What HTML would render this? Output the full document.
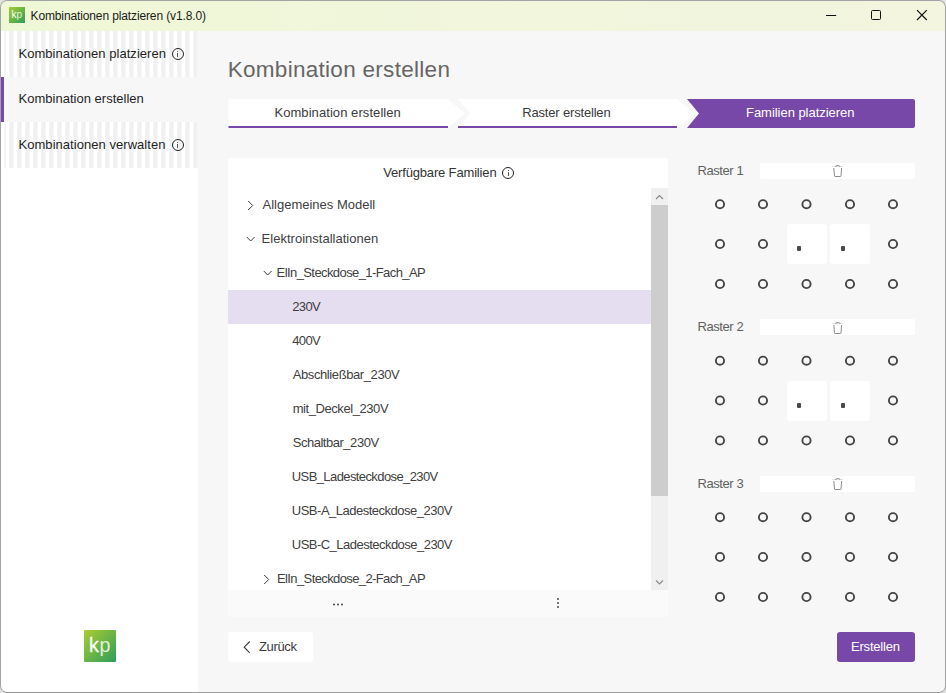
<!DOCTYPE html>
<html><head><meta charset="utf-8">
<style>
*{margin:0;padding:0;box-sizing:border-box}
html,body{width:946px;height:693px;overflow:hidden;background:#e2e2e2}
body{position:relative;font-family:"Liberation Sans",sans-serif;color:#333}
.abs{position:absolute}
.tx{position:absolute;white-space:nowrap;z-index:5}
#win{position:absolute;left:0;top:0;width:946px;height:693px;border-radius:7px;overflow:hidden;background:#f7f7f7}
#frame{position:absolute;left:0;top:0;width:946px;height:693px;border:1px solid #a3a3a6;border-bottom-color:#999;border-radius:7px;pointer-events:none;z-index:10}
#title{position:absolute;left:0;top:0;width:946px;height:31px;background:linear-gradient(90deg,#eff8d6,#f1f6dc 50%,#f3f5df)}
#sidebar{position:absolute;left:1px;top:31px;width:197px;height:662px;background:#fff}
.stripes{background:repeating-linear-gradient(90deg,#f5f5f5 0,#f5f5f5 1px,#f0f0f0 1px,#f0f0f0 4px,#f5f5f5 4px,#f5f5f5 5px,#fff 5px,#fff 8px)}
.stripes:before{content:"";position:absolute;left:0;top:0;width:4px;height:100%;background:linear-gradient(90deg,#fff 0,#fff 3px,#f6f6f6 3px)}
.navitem{position:absolute;left:0;width:197px}
.info{position:absolute;width:12px;height:12px;border:1px solid #222;border-radius:50%;z-index:5}
.info:after{content:"";position:absolute;left:4.5px;top:3.5px;width:1px;height:4.8px;background:#555}
.info:before{content:"";position:absolute;left:4.5px;top:1.8px;width:1px;height:1px;background:#666}
.dot{position:absolute;width:10px;height:10px;border:1.8px solid #454545;border-radius:50%}
.cell{position:absolute;width:40px;height:40px;background:#fff;border-radius:3px}
.del{position:absolute;left:760px;width:155px;height:16px;background:#fff;border-radius:2px}
</style></head><body>
<div id="win">
  <div id="title">
    <div class="abs" style="left:9px;top:7px;width:16px;height:16px;background:linear-gradient(135deg,#a7cb30,#2f9f5a);"></div>
    <div class="abs" style="left:11.5px;top:9px;font-size:10px;line-height:12px;color:#fff">k<span style="opacity:.8">p</span></div>
    <svg class="abs" style="left:0;top:0" width="946" height="31">
      <line x1="826" y1="15.5" x2="836.2" y2="15.5" stroke="#111" stroke-width="1"/>
      <rect x="871.5" y="10.5" width="9" height="9" rx="1" fill="none" stroke="#111" stroke-width="1"/>
      <path d="M917 10.2 L926.8 20 M926.8 10.2 L917 20" stroke="#111" stroke-width="1.2"/>
    </svg>
  </div>
  <div id="sidebar">
    <div class="navitem stripes" style="top:0;height:46px"></div>
    <div class="navitem" style="top:46px;height:45px;background:#f7f7f7">
      <div class="abs" style="left:0;top:0;width:3px;height:45px;background:#7748a8"></div>
    </div>
    <div class="navitem stripes" style="top:91px;height:46px"></div>
  </div>
  <svg class="abs" style="left:84px;top:630px" width="32" height="32"><defs><linearGradient id="lg" x1="0" y1="0" x2="1" y2="1"><stop offset="0" stop-color="#aacc2f"/><stop offset="1" stop-color="#2e9e5b"/></linearGradient></defs><rect width="32" height="32" rx="1" fill="url(#lg)"/><text x="5" y="22" font-family="Liberation Sans" font-size="19.6" fill="#fff" stroke="#fff" stroke-width="0.3">k</text><text x="15.6" y="22" font-family="Liberation Sans" font-size="19.6" fill="rgba(255,255,255,0.82)">p</text></svg>
  <div class="info" style="left:171.5px;top:48px"></div>
  <div class="info" style="left:171.5px;top:139px"></div>

  <svg class="abs" style="left:0;top:0" width="946" height="140">
    <path d="M230.5 99 H448 L465 113.5 L448 128 H230.5 Q228.5 128 228.5 126 V101 Q228.5 99 230.5 99 Z" fill="#fff"/>
    <rect x="228.5" y="126" width="219.5" height="2" fill="#7748a8"/>
    <path d="M458 99 H677 L694 113.5 L677 128 H458 L470 113.5 Z" fill="#fff"/>
    <rect x="458" y="126" width="219" height="2" fill="#7748a8"/>
    <path d="M687 99 H913 Q915 99 915 101 V126 Q915 128 913 128 H687 L699 113.5 Z" fill="#7748a8"/>
  </svg>

  <div class="abs" style="left:228px;top:158px;width:440px;height:459px;background:#fff;border-radius:3px;overflow:hidden">
    <div class="info" style="left:274px;top:9px"></div>
    <div class="abs" style="left:0;top:30px;width:423px;height:402px;overflow:hidden">
      <div class="abs" style="left:0;top:102px;width:423px;height:34px;background:#e5def0"></div>
      <svg class="abs" style="left:18px;top:0" width="10" height="34"><path d="M2.2 13 L6.7 17.5 L2.2 22" fill="none" stroke="#383838" stroke-width="1"/></svg>
      <svg class="abs" style="left:18px;top:34px" width="10" height="34"><path d="M0.8 15 L4.7 19 L8.6 15" fill="none" stroke="#383838" stroke-width="1"/></svg>
      <svg class="abs" style="left:35px;top:68px" width="10" height="34"><path d="M0.8 15 L4.7 19 L8.6 15" fill="none" stroke="#383838" stroke-width="1"/></svg>
      <svg class="abs" style="left:34px;top:374px" width="10" height="34"><path d="M2.2 13 L6.7 17.5 L2.2 22" fill="none" stroke="#383838" stroke-width="1"/></svg>
    </div>
    <div class="abs" style="left:423px;top:30px;width:17px;height:402px;background:#f0f0f0">
      <div class="abs" style="left:0;top:17px;width:17px;height:291px;background:#cdcdcd"></div>
      <svg class="abs" style="left:0;top:0" width="17" height="402">
        <path d="M5 11 L8.5 7.5 L12 11" fill="none" stroke="#8a8a8a" stroke-width="1.2"/>
        <path d="M5 392.5 L8.5 396 L12 392.5" fill="none" stroke="#8a8a8a" stroke-width="1.2"/>
      </svg>
    </div>
    <div class="abs" style="left:0;top:432px;width:440px;height:27px;background:#fafafa">
      <svg class="abs" style="left:0;top:0" width="440" height="27">
        <circle cx="106" cy="14.5" r="0.9" fill="#333"/><circle cx="110" cy="14.5" r="0.9" fill="#333"/><circle cx="114" cy="14.5" r="0.9" fill="#333"/>
        <circle cx="330" cy="9" r="0.9" fill="#333"/><circle cx="330" cy="13" r="0.9" fill="#333"/><circle cx="330" cy="17" r="0.9" fill="#333"/>
      </svg>
    </div>
  </div>
  <div id="rasters">
  <div class="del" style="top:162.7px"></div>
<svg class="abs" style="left:826px;top:162px" width="24" height="18"><path d="M6 4.6 H17" stroke="#e4e4e4" stroke-width="1"/><path d="M9.6 4.9 Q9.6 3.6 11 3.6 H12.6 Q14 3.6 14 4.9" fill="none" stroke="#8c8c8c" stroke-width="1"/><path d="M7.8 6 L8.5 14 Q8.6 14.5 9.1 14.5 H14.4 Q14.9 14.5 15 14 L15.6 6" fill="none" stroke="#8c8c8c" stroke-width="1"/></svg>
<div class="cell" style="left:787px;top:224px"></div>
<div class="abs" style="left:797px;top:246px;width:4px;height:5px;background:#4a4a4a;border-radius:1px"></div>
<div class="cell" style="left:830px;top:224px"></div>
<div class="abs" style="left:841px;top:246px;width:4px;height:5px;background:#4a4a4a;border-radius:1px"></div>
<div class="del" style="top:319.2px"></div>
<svg class="abs" style="left:826px;top:318.5px" width="24" height="18"><path d="M6 4.6 H17" stroke="#e4e4e4" stroke-width="1"/><path d="M9.6 4.9 Q9.6 3.6 11 3.6 H12.6 Q14 3.6 14 4.9" fill="none" stroke="#8c8c8c" stroke-width="1"/><path d="M7.8 6 L8.5 14 Q8.6 14.5 9.1 14.5 H14.4 Q14.9 14.5 15 14 L15.6 6" fill="none" stroke="#8c8c8c" stroke-width="1"/></svg>
<div class="cell" style="left:787px;top:380.5px"></div>
<div class="abs" style="left:797px;top:402.5px;width:4px;height:5px;background:#4a4a4a;border-radius:1px"></div>
<div class="cell" style="left:830px;top:380.5px"></div>
<div class="abs" style="left:841px;top:402.5px;width:4px;height:5px;background:#4a4a4a;border-radius:1px"></div>
<div class="del" style="top:475.7px"></div>
<svg class="abs" style="left:826px;top:475px" width="24" height="18"><path d="M6 4.6 H17" stroke="#e4e4e4" stroke-width="1"/><path d="M9.6 4.9 Q9.6 3.6 11 3.6 H12.6 Q14 3.6 14 4.9" fill="none" stroke="#8c8c8c" stroke-width="1"/><path d="M7.8 6 L8.5 14 Q8.6 14.5 9.1 14.5 H14.4 Q14.9 14.5 15 14 L15.6 6" fill="none" stroke="#8c8c8c" stroke-width="1"/></svg>
  <svg class="abs" style="left:0;top:0" width="946" height="693"><g fill="none" stroke="#454545" stroke-width="1.9"><circle cx="720" cy="204.2" r="4.1"/><circle cx="763" cy="204.2" r="4.1"/><circle cx="806.5" cy="204.2" r="4.1"/><circle cx="850" cy="204.2" r="4.1"/><circle cx="893" cy="204.2" r="4.1"/><circle cx="720" cy="244" r="4.1"/><circle cx="763" cy="244" r="4.1"/><circle cx="893" cy="244" r="4.1"/><circle cx="720" cy="284" r="4.1"/><circle cx="763" cy="284" r="4.1"/><circle cx="806.5" cy="284" r="4.1"/><circle cx="850" cy="284" r="4.1"/><circle cx="893" cy="284" r="4.1"/><circle cx="720" cy="360.7" r="4.1"/><circle cx="763" cy="360.7" r="4.1"/><circle cx="806.5" cy="360.7" r="4.1"/><circle cx="850" cy="360.7" r="4.1"/><circle cx="893" cy="360.7" r="4.1"/><circle cx="720" cy="400.5" r="4.1"/><circle cx="763" cy="400.5" r="4.1"/><circle cx="893" cy="400.5" r="4.1"/><circle cx="720" cy="440.5" r="4.1"/><circle cx="763" cy="440.5" r="4.1"/><circle cx="806.5" cy="440.5" r="4.1"/><circle cx="850" cy="440.5" r="4.1"/><circle cx="893" cy="440.5" r="4.1"/><circle cx="720" cy="517.2" r="4.1"/><circle cx="763" cy="517.2" r="4.1"/><circle cx="806.5" cy="517.2" r="4.1"/><circle cx="850" cy="517.2" r="4.1"/><circle cx="893" cy="517.2" r="4.1"/><circle cx="720" cy="557" r="4.1"/><circle cx="763" cy="557" r="4.1"/><circle cx="806.5" cy="557" r="4.1"/><circle cx="850" cy="557" r="4.1"/><circle cx="893" cy="557" r="4.1"/><circle cx="720" cy="597" r="4.1"/><circle cx="763" cy="597" r="4.1"/><circle cx="806.5" cy="597" r="4.1"/><circle cx="850" cy="597" r="4.1"/><circle cx="893" cy="597" r="4.1"/></g></svg>
  </div>
  <div class="abs" style="left:228px;top:632px;width:85px;height:30px;background:#fff;border-radius:3px"></div>
  <svg class="abs" style="left:0;top:620px" width="330" height="60"><path d="M249.7 21.5 L244.2 27.2 L249.7 32.8" fill="none" stroke="#3a3a3a" stroke-width="1.1"/></svg>
  <div class="abs" style="left:837px;top:632px;width:78px;height:30px;background:#7748a8;border-radius:3px"></div>
  <div class="tx" style="left:30.50px;top:9.64px;font-size:12px;line-height:12px;letter-spacing:-0.123px;color:#1a1a1a">Kombinationen platzieren (v1.8.0)</div>
<div class="tx" style="left:18.50px;top:47.40px;font-size:13px;line-height:13px;letter-spacing:0.031px;color:#1f1f1f">Kombinationen platzieren</div>
<div class="tx" style="left:18.50px;top:92.40px;font-size:13px;line-height:13px;letter-spacing:0.016px;color:#1f1f1f">Kombination erstellen</div>
<div class="tx" style="left:18.50px;top:137.80px;font-size:13px;line-height:13px;letter-spacing:0.043px;color:#1f1f1f">Kombinationen verwalten</div>
<div class="tx" style="left:227.70px;top:59.15px;font-size:22.5px;line-height:22.5px;letter-spacing:0.292px;color:#666666">Kombination erstellen</div>
<div class="tx" style="left:274.40px;top:106.00px;font-size:13px;line-height:13px;letter-spacing:0.071px;color:#3a3a3a">Kombination erstellen</div>
<div class="tx" style="left:522.30px;top:106.00px;font-size:13px;line-height:13px;letter-spacing:-0.181px;color:#3a3a3a">Raster erstellen</div>
<div class="tx" style="left:746.00px;top:106.00px;font-size:13px;line-height:13px;letter-spacing:-0.037px;color:#ffffff">Familien platzieren</div>
<div class="tx" style="left:383.20px;top:166.40px;font-size:13px;line-height:13px;letter-spacing:-0.162px;color:#333">Verfügbare Familien</div>
<div class="tx" style="left:262.50px;top:197.70px;font-size:13px;line-height:13px;letter-spacing:-0.002px;color:#404040">Allgemeines Modell</div>
<div class="tx" style="left:261.60px;top:231.70px;font-size:13px;line-height:13px;letter-spacing:0.014px;color:#404040">Elektroinstallationen</div>
<div class="tx" style="left:276.60px;top:265.70px;font-size:13px;line-height:13px;letter-spacing:-0.588px;color:#404040">ElIn_Steckdose_1-Fach_AP</div>
<div class="tx" style="left:292.30px;top:299.70px;font-size:13px;line-height:13px;letter-spacing:-0.663px;color:#404040">230V</div>
<div class="tx" style="left:292.30px;top:333.70px;font-size:13px;line-height:13px;letter-spacing:-0.663px;color:#404040">400V</div>
<div class="tx" style="left:292.70px;top:367.70px;font-size:13px;line-height:13px;letter-spacing:-0.399px;color:#404040">Abschließbar_230V</div>
<div class="tx" style="left:292.70px;top:401.70px;font-size:13px;line-height:13px;letter-spacing:-0.430px;color:#404040">mit_Deckel_230V</div>
<div class="tx" style="left:292.70px;top:435.70px;font-size:13px;line-height:13px;letter-spacing:-0.472px;color:#404040">Schaltbar_230V</div>
<div class="tx" style="left:291.80px;top:469.70px;font-size:13px;line-height:13px;letter-spacing:-0.597px;color:#404040">USB_Ladesteckdose_230V</div>
<div class="tx" style="left:291.80px;top:503.70px;font-size:13px;line-height:13px;letter-spacing:-0.493px;color:#404040">USB-A_Ladesteckdose_230V</div>
<div class="tx" style="left:291.80px;top:537.70px;font-size:13px;line-height:13px;letter-spacing:-0.524px;color:#404040">USB-C_Ladesteckdose_230V</div>
<div class="tx" style="left:277.00px;top:571.70px;font-size:13px;line-height:13px;letter-spacing:-0.610px;color:#404040">ElIn_Steckdose_2-Fach_AP</div>
<div class="tx" style="left:697.50px;top:164.10px;font-size:13px;line-height:13px;letter-spacing:-0.429px;color:#5f5f5f">Raster 1</div>
<div class="tx" style="left:697.50px;top:320.00px;font-size:13px;line-height:13px;letter-spacing:-0.429px;color:#5f5f5f">Raster 2</div>
<div class="tx" style="left:697.50px;top:477.20px;font-size:13px;line-height:13px;letter-spacing:-0.429px;color:#5f5f5f">Raster 3</div>
<div class="tx" style="left:259.00px;top:640.30px;font-size:13px;line-height:13px;letter-spacing:-0.366px;color:#3a3a3a">Zurück</div>
<div class="tx" style="left:851.00px;top:640.30px;font-size:13px;line-height:13px;letter-spacing:-0.206px;color:#ffffff">Erstellen</div>
</div>
<div id="frame"></div>
</body></html>
